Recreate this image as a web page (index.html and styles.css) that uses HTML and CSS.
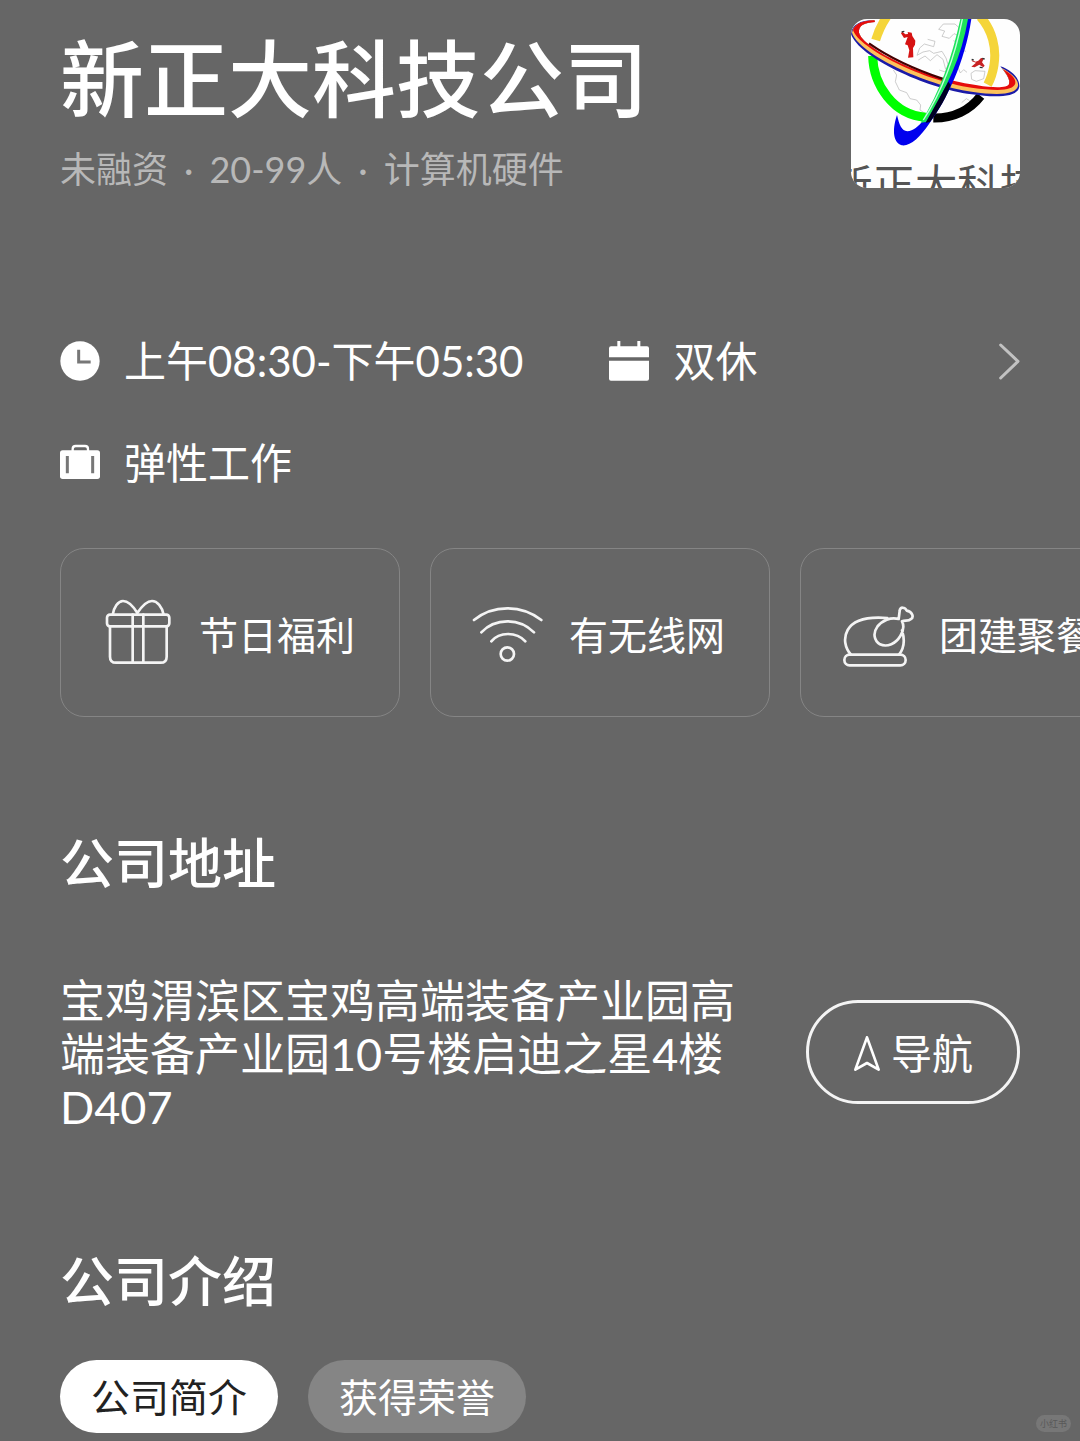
FILE: index.html
```html
<!DOCTYPE html>
<html lang="zh-CN">
<head>
<meta charset="utf-8">
<meta name="viewport" content="width=device-width, initial-scale=1">
<title>新正大科技公司</title>
<link rel="stylesheet" href="styles.css">
</head>
<body>
<main class="page">
  <header class="company">
    <div class="company-text">
      <h1>新正大科技公司</h1>
      <p class="meta"><span>未融资</span><span>·</span><span>20-99人</span><span>·</span><span>计算机硬件</span></p>
    </div>
    <svg class="logo" viewBox="38 27 507 507" role="img" aria-label="公司标志">
      <rect x="38" y="27" width="507" height="507" fill="#fefefe"/>
      <g fill="none" stroke="#b4b4b4" stroke-width="2">
        <path d="M165 180l10 15-4 20 12 25 22 8 10 18 20 4 12 15-2 15 15 10"/>
        <path d="M315 42l-14 16 18 5-8 16 22 6 14-14 12 5 6-20-15-14zM268 88l22 6-4 16-28-8-14 12-8 22 18-10 20-4 12 8 25-6 12 20 6 20-8 22-18-6"/>
        <path d="M240 150l20-12 16 14 20-18 18 14 8 30M345 92l16 6 8 22 14 4M356 165l10 24 10-10 10 8M398 190l12-8 30 2-4 22-22 8-14-6zM370 278l14-12 10 6"/>
      </g>
      <g fill="none" stroke-width="27">
        <path d="M145 20C133 38 121 60 112 90" stroke="#f5d53a"/>
        <path d="M426 20C462 60 475 115 467 165Q462 198 448 224" stroke="#f5d53a"/>
        <path d="M103 138C105 225 165 315 262 322" stroke="#0f0"/>
        <path d="M285 324C345 325 395 300 427 258" stroke="#000"/>
      </g>
      <path d="M38 72C40 45 65 30 108 30L110 36C75 38 60 48 62 68C75 115 235 190 338 215C430 240 505 245 512 225C517 207 502 190 486 169C520 180 545 205 543 230C538 260 480 265 400 253C260 235 60 140 38 72z" fill="#1b1ba8"/>
      <path d="M41 68C46 42 72 33 108 31L110 36C75 38 60 48 62 68C75 115 235 190 338 215C430 240 505 245 512 225C517 207 502 190 490 174C520 190 541 208 539 228C532 254 480 257 400 245C260 225 60 130 41 68z" fill="#fcc25c"/>
      <path d="M44 60C52 40 74 33 108 31L110 36C75 38 60 48 62 68C75 115 235 190 338 211C430 232 505 240 512 222C517 207 502 190 494 178C519 192 533 206 531 220C524 244 475 243 400 233C260 214 60 115 44 60z" fill="#e60c0c"/>
      <path d="M92 100C160 148 240 182 318 208" fill="none" stroke="#400" stroke-width="7"/>
      <path d="M399 27C380 155 325 270 272 342C245 382 215 410 190 406C160 395 164 350 176 315C183 345 190 362 207 364C225 362 240 350 256 330C315 245 345 145 376 27z" fill="#00e"/>
      <path d="M389 27C370 140 325 235 263 336L247 338C305 245 340 145 366 27z" fill="#1ee45a"/>
      <path d="M372 27C350 140 310 245 255 330" fill="none" stroke="#c8ffe0" stroke-width="4"/>
      <path d="M330 215L262 338L275 336C305 295 325 260 337 225z" fill="#002"/>
      <path d="M208 66l12 2 2 10 9 14-1 12-6 10 1 28-16 1 4-22-5-15-8-3 8-22-11 3-9-14 4-5 9 8 8-1z" fill="#d61212"/>
      <path d="M400 150l12 5 8-3 8-8 9 1-6 12 8 10-4 5-12-8-14 8-10-2 14-12-12-4z" fill="#c82222"/>
      <path d="M190 66l8-2M432 145l7 2M424 172l9 1M400 148l6 2" stroke="#333" stroke-width="4"/>
      <text class="logo-name" x="-24" y="571">新正大科技</text>
    </svg>
  </header>

  <section class="work" aria-label="工作时间">
    <ul class="work-list">
      <li>
        <svg class="work-icon" viewBox="59 61 120 120" aria-hidden="true"><circle cx="119" cy="121" r="59" fill="#fff"/><path d="M115 87v37h36" fill="none" stroke="#777" stroke-width="9"/></svg>
        <span>上午08:30-下午05:30</span>
      </li>
      <li>
        <svg class="work-icon" viewBox="57 56 120 120" aria-hidden="true"><path d="M57 105V78q0-6 6-6h108q6 0 6 6v27zM57 115h120v54q0 6-6 6H63q-6 0-6-6zM82 56h9v18h-9zM142 56h9v18h-9z" fill="#fff"/></svg>
        <span>双休</span>
      </li>
      <li>
        <svg class="work-icon" viewBox="59 366 120 120" aria-hidden="true"><rect x="59" y="388" width="120" height="86" rx="8" fill="#fff"/><path d="M97 390v-6q0-9 9-9h28q9 0 9 9v6" fill="none" stroke="#fff" stroke-width="7"/><path d="M81 405v52M157 405v52" stroke="#777" stroke-width="9"/></svg>
        <span>弹性工作</span>
      </li>
    </ul>
    <button class="more" type="button" aria-label="查看更多"><svg viewBox="1228 70 63 111" aria-hidden="true"><path d="M1233 76l52 49-52 50" fill="none" stroke="#c2c2c2" stroke-width="9" stroke-linecap="round" stroke-linejoin="round"/></svg></button>
  </section>

  <ul class="benefits">
    <li class="benefit">
      <svg class="benefit-icon" viewBox="156 176 216 216" aria-hidden="true"><path d="M188 223c4-22 16-41 31-41 18 0 32 18 43 36 12-18 27-36 44-36 16 0 30 18 35 41"/><rect x="171" y="223" width="187" height="35" rx="9"/><path d="M180 258v91q0 18 18 18h134q18 0 18-18v-91M248 223v144M280 223v144"/></svg>
      <span>节日福利</span>
    </li>
    <li class="benefit">
      <svg class="benefit-icon" viewBox="156 176 216 216" aria-hidden="true"><path d="M162 239Q205 204 262 204T364 239M184 276Q215 243 262 243T342 276M214 303Q232 281 264 281T316 303"/><circle cx="262" cy="341" r="20"/></svg>
      <span>有无线网</span>
    </li>
    <li class="benefit">
      <svg class="benefit-icon" viewBox="156 176 216 216" aria-hidden="true"><rect x="163" y="343" width="184" height="32" rx="16"/><path d="M183 343C165 323 159 294 173 269C190 239 232 228 292 233M336 270C345 298 342 324 327 343M326 236C302 229 276 241 262 259C248 278 252 301 270 312C292 322 318 309 331 287C341 270 343 256 336 243M326 236L329 212C329 198 346 200 350 211C366 214 373 229 363 236C355 244 346 239 336 243"/></svg>
      <span>团建聚餐</span>
    </li>
  </ul>

  <section class="address-section">
    <h2>公司地址</h2>
    <div class="address-row">
      <address>宝鸡渭滨区宝鸡高端装备产业园高端装备产业园10号楼启迪之星4楼D407</address>
      <button class="navigate" type="button"><svg viewBox="188 163 84 111" aria-hidden="true"><path d="M230 170l-35 97 35-20 35 20z" fill="none" stroke="#fff" stroke-width="8" stroke-linejoin="round"/></svg>导航</button>
    </div>
  </section>

  <section class="intro-section">
    <h2>公司介绍</h2>
    <div class="tabs">
      <button class="tab tab-active" type="button">公司简介</button>
      <button class="tab" type="button">获得荣誉</button>
    </div>
  </section>
  <span class="watermark">小红书</span>
</main>
</body>
</html>
```
FILE: styles.css
```css
* { box-sizing: border-box; }

body {
  margin: 0;
  background: #666;
  color: #fff;
  font-family: Lato, "Noto Sans CJK SC", sans-serif;
}

h1, h2, p, ul { margin: 0; padding: 0; }
ul { list-style: none; }
button { font: inherit; color: inherit; cursor: pointer; }

.page {
  position: relative;
  padding: 19px 60px 8px;
  overflow: hidden;
}

.company {
  display: flex;
  justify-content: space-between;
  align-items: flex-start;
}

h1 {
  font-size: 84px;
  line-height: 120px;
  font-weight: 500;
}

.meta {
  display: flex;
  gap: 16px;
  margin-top: 4px;
  font-size: 36px;
  line-height: 52px;
  color: #b8b8b8;
}

.logo {
  flex: none;
  width: 169px;
  height: 169px;
  border-radius: 16px;
}

.logo-name {
  font-family: "Noto Sans CJK SC", sans-serif;
  font-size: 127px;
  fill: #555;
}

.work {
  display: flex;
  justify-content: space-between;
  align-items: flex-start;
  margin-top: 136px;
  font-size: 42px;
  line-height: 60px;
}

.work-list {
  display: flex;
  flex-wrap: wrap;
  gap: 42px 86px;
  max-width: 820px;
}

.work-list li {
  display: flex;
  align-items: center;
  gap: 24px;
}

.work-icon {
  width: 40px;
  height: 40px;
}

.more {
  display: flex;
  align-items: center;
  height: 60px;
  padding: 0;
  border: 0;
  background: none;
}

.more svg {
  width: 21px;
  height: 37px;
}

.benefits {
  display: flex;
  gap: 30px;
  margin: 55px -60px 0 0;
  overflow: hidden;
}

.benefit {
  display: flex;
  flex: none;
  align-items: center;
  gap: 25px;
  width: 340px;
  height: 169px;
  padding: 4px 41px 0;
  border: 1px solid #858585;
  border-radius: 24px;
  font-size: 39px;
  line-height: 56px;
  white-space: nowrap;
}

.benefit-icon {
  flex: none;
  width: 72px;
  height: 72px;
  fill: none;
  stroke: #f4f4f4;
  stroke-width: 8;
  stroke-linecap: round;
  stroke-linejoin: round;
}

h2 {
  font-size: 54px;
  line-height: 76px;
  font-weight: 500;
}

.address-section { margin-top: 109px; }

.address-row {
  display: flex;
  justify-content: space-between;
  align-items: center;
  margin-top: 67px;
}

address {
  max-width: 700px;
  padding-top: 6px;
  font-size: 45px;
  line-height: 53px;
  font-style: normal;
}

.navigate {
  display: flex;
  flex: none;
  align-items: center;
  justify-content: center;
  gap: 10px;
  width: 214px;
  height: 104px;
  padding: 4px 0 0;
  border: 3px solid #f4f4f4;
  border-radius: 52px;
  background: none;
  font-size: 41px;
  line-height: 60px;
}

.navigate svg {
  width: 28px;
  height: 37px;
}

.intro-section { margin-top: 110px; }

.tabs {
  display: flex;
  gap: 30px;
  margin-top: 40px;
}

.tab {
  width: 218px;
  height: 73px;
  padding: 0;
  border: 0;
  border-radius: 37px;
  background: #858585;
  font-size: 39px;
  line-height: 56px;
}

.tab-active {
  background: #fff;
  color: #222;
}

.watermark {
  position: absolute;
  right: 9px;
  bottom: 9px;
  padding: 0 4px;
  border-radius: 9px;
  background: #777;
  color: #595959;
  font-size: 9px;
  line-height: 17px;
}
```
